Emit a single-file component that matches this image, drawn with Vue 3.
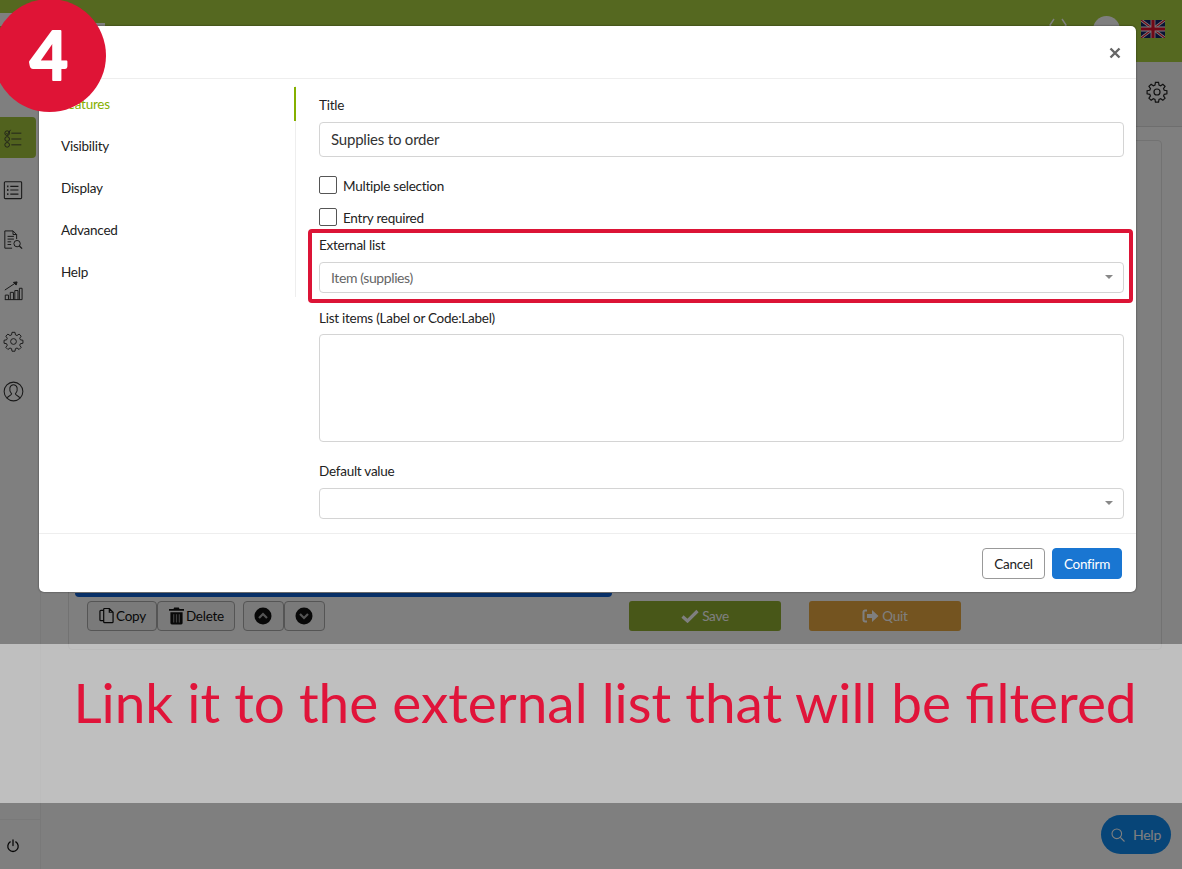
<script setup>
const navItems = [
  { label: 'Features', active: true },
  { label: 'Visibility' },
  { label: 'Display' },
  { label: 'Advanced' },
  { label: 'Help' },
]
</script>

<template>
  <div class="app">
    <div class="page">
      <header class="topbar">
        <div class="logo"></div>
        <div class="top-right">
          <svg class="code-ic" width="22" height="14" viewBox="0 0 22 14"><path d="M7 1 3 7l4 6M15 1l4 6-4 6" fill="none" stroke="#fff" stroke-width="1.4"/></svg>
          <div class="avatar"></div>
          <svg class="flag" width="24" height="18" viewBox="0 0 60 45">
            <rect width="60" height="45" fill="#12246a"/>
            <path d="M0 0 60 45M60 0 0 45" stroke="#fff" stroke-width="7"/>
            <path d="M0 0 60 45M60 0 0 45" stroke="#e0102e" stroke-width="3"/>
            <path d="M30 0v45M0 22.500h60" stroke="#fff" stroke-width="12"/>
            <path d="M30 0v45M0 22.500h60" stroke="#e0102e" stroke-width="8"/>
          </svg>
        </div>
      </header>
      <div class="below">
        <aside class="sidebar">
          <div class="side-list">
            <div class="side-item on">
              <svg width="20" height="20" viewBox="0 0 24 24" fill="none" stroke="#333" stroke-width="1"><circle cx="5" cy="5" r="2.800"/><circle cx="5" cy="12" r="2.800"/><circle cx="5" cy="19" r="2.800"/><path d="M10 5h12M10 12h12M10 19h12M4 5l1.500 1.500L9 1"/></svg>
            </div>
            <div class="side-item">
              <svg width="20" height="20" viewBox="0 0 22 22" fill="none" stroke="#333" stroke-width="1.200"><rect x="1.500" y="2" width="19" height="18.500" rx="1"/><path d="M8 7h9M8 11h9M8 15.500h9"/><path d="M4.500 7h1.500M4.500 11h1.500M4.500 15.500h1.500" stroke-width="2"/></svg>
            </div>
            <div class="side-item">
              <svg width="20" height="20" viewBox="0 0 22 22" fill="none" stroke="#333" stroke-width="1.100"><path d="M10 20H2V1h9l4 4v5"/><path d="M11 1v4h4M5 7h7M5 10h7M5 13h4M5 16h4"/><circle cx="15.500" cy="15" r="3.500"/><path d="M18 17.500l3 3" stroke-width="1.500"/></svg>
            </div>
            <div class="side-item">
              <svg width="20" height="20" viewBox="0 0 22 22" fill="none" stroke="#333" stroke-width="1.100"><path d="M2 20.500h19M2.500 20.500v-5h3.500v5M8 20.500v-8h3.500v8M13 20.500v-10h3.500v10M18 20.500V8h3v12.500M2 10 14 2"/><path d="M11.500 1.500 15.500 1l-1 3.500z" fill="#333"/></svg>
            </div>
            <div class="side-item">
              <svg width="21" height="21" viewBox="0 0 24 24" fill="none" stroke="#333" stroke-width="1.100"><path d="M10.300 2h3.400l.5 2.900 1.800.8 2.400-1.700 2.400 2.400-1.700 2.400.8 1.800 2.900.5v3.400l-2.900.5-.8 1.800 1.700 2.400-2.400 2.400-2.400-1.700-1.800.8-.5 2.900h-3.400l-.5-2.900-1.800-.8-2.400 1.700-2.400-2.400 1.700-2.400-.8-1.800-2.900-.5v-3.400l2.900-.5.8-1.800-1.700-2.400 2.400-2.400 2.400 1.700 1.800-.8z" transform="translate(0 -.500)"/><circle cx="12" cy="12" r="3.300"/></svg>
            </div>
            <div class="side-item">
              <svg width="21" height="21" viewBox="0 0 22 22" fill="none" stroke="#333" stroke-width="1.100"><circle cx="11" cy="11" r="9.800"/><path d="M4.500 18c.5-2.500 4-2.500 4.500-4.500-3.500-4-2-9.500 2-9.500s5.500 5.500 2 9.500c.5 2 4 2 4.500 4.500"/></svg>
            </div>
          </div>
          <div class="power">
            <svg width="14" height="14" viewBox="0 0 14 14" fill="none" stroke="#111" stroke-width="1.300" stroke-linecap="round"><path d="M7 1v5.500M4.200 2.900a5.200 5.200 0 1 0 5.600 0"/></svg>
          </div>
        </aside>
        <main class="main">
          <div class="subbar">
            <svg width="22" height="22" viewBox="0 0 24 24" fill="none" stroke="#222" stroke-width="1.300"><path d="M10.300 2h3.400l.5 2.900 1.800.8 2.400-1.700 2.400 2.400-1.700 2.400.8 1.800 2.900.5v3.400l-2.900.5-.8 1.800 1.700 2.400-2.400 2.400-2.400-1.700-1.800.8-.5 2.900h-3.400l-.5-2.900-1.800-.8-2.400 1.700-2.400-2.400 1.700-2.400-.8-1.800-2.900-.5v-3.400l2.900-.5.8-1.800-1.700-2.400 2.400-2.400 2.400 1.700 1.800-.8z" transform="translate(0 -.500)"/><circle cx="12" cy="12" r="3.300"/></svg>
          </div>
          <section class="card">
            <div class="bluebar"></div>
            <div class="toolbar">
              <div class="tools">
                <div class="group">
                  <button class="tool">
                    <svg width="15" height="18" viewBox="0 0 16 18" fill="none" stroke="#111" stroke-width="1.300"><path d="M5 14H2a1 1 0 0 1-1-1V4a1 1 0 0 1 1-1h3"/><path d="M5.500 1H11l4 4v10a1 1 0 0 1-1 1H6a1 1 0 0 1-1-1V2a1 1 0 0 1 .500-1zM11 1v4h4"/></svg>
                    Copy
                  </button>
                  <button class="tool">
                    <svg width="15" height="18" viewBox="0 0 16 18"><path d="M5.500 0h5l.7 1.500H16v2H0v-2h4.800zM1.500 5h13v11.500a1.500 1.500 0 0 1-1.500 1.500H3a1.500 1.500 0 0 1-1.500-1.500z" fill="#111"/><path d="M5 7v9M8 7v9M11 7v9" stroke="#808080" stroke-width="1.300"/></svg>
                    Delete
                  </button>
                </div>
                <div class="group">
                  <button class="tool round">
                    <svg width="18" height="18" viewBox="0 0 18 18"><circle cx="9" cy="9" r="8.500" fill="#111"/><path d="M5 11l4-4 4 4" fill="none" stroke="#aaa" stroke-width="2.200"/></svg>
                  </button>
                  <button class="tool round">
                    <svg width="18" height="18" viewBox="0 0 18 18"><circle cx="9" cy="9" r="8.500" fill="#111"/><path d="M5 7l4 4 4-4" fill="none" stroke="#aaa" stroke-width="2.200"/></svg>
                  </button>
                </div>
              </div>
              <div class="actions">
                <button class="act save">
                  <svg width="18" height="14" viewBox="0 0 18 14"><path d="M1.500 7.500 6.500 12 16.500 2" fill="none" stroke="#fff" stroke-width="3.200"/></svg>
                  Save
                </button>
                <button class="act quit">
                  <svg width="17" height="14" viewBox="0 0 17 14"><path d="M5 1.500H3A1.500 1.500 0 0 0 1.500 3v8A1.500 1.500 0 0 0 3 12.500h2" fill="none" stroke="#fff" stroke-width="2"/><path d="M5 5h5V1l6.500 6L10 13V9H5z" fill="#fff"/></svg>
                  Quit
                </button>
              </div>
            </div>
          </section>
        </main>
      </div>
      <button class="help">
        <svg width="14" height="14" viewBox="0 0 14 14" fill="none" stroke="#fff" stroke-width="1.100"><circle cx="5.800" cy="5.800" r="4.800"/><path d="m9.300 9.300 4.200 4.200"/></svg>
        Help
      </button>
    </div>

    <div class="backdrop"></div>

    <div class="modal">
      <div class="modal-head">
        <svg class="close" width="12" height="12" viewBox="0 0 12 12"><path d="M1.500 1.500l9 9M10.500 1.500l-9 9" stroke="#666" stroke-width="2.400"/></svg>
      </div>
      <div class="modal-body">
        <nav class="modal-nav">
          <a v-for="item in navItems" :key="item.label" class="nav-link" :class="{ active: item.active }">{{ item.label }}</a>
        </nav>
        <form class="form">
          <label class="label first">Title</label>
          <div class="input title">Supplies to order</div>
          <label class="check one"><span class="box"></span><span class="check-text">Multiple selection</span></label>
          <label class="check two"><span class="box"></span><span class="check-text">Entry required</span></label>
          <div class="highlighted">
            <label class="label ext">External list</label>
            <div class="input select"><span>Item (supplies)</span><i class="caret"></i></div>
            <div class="red-frame"></div>
          </div>
          <label class="label items">List items (Label or Code:Label)</label>
          <div class="input area"></div>
          <label class="label def">Default value</label>
          <div class="input select"><span></span><i class="caret"></i></div>
        </form>
      </div>
      <div class="modal-foot">
        <button class="btn cancel">Cancel</button>
        <button class="btn confirm">Confirm</button>
      </div>
    </div>

    <div class="caption">Link it to the external list that will be filtered</div>

    <div class="badge">
      <svg width="113" height="113" viewBox="0 0 113 113">
        <text x="56" y="81" text-anchor="middle" class="badge-num">4</text>
      </svg>
    </div>
  </div>
</template>

<style>
html, body { margin: 0; background: #fff; }
</style>

<style scoped>
* { box-sizing: border-box; }
.app {
  position: relative;
  width: 1182px;
  height: 869px;
  overflow: hidden;
  font-family: Lato, "Liberation Sans", sans-serif;
  font-size: 13.500px;
  letter-spacing: -0.25px;
  color: #222;
}
button { font-family: inherit; letter-spacing: inherit; }

.page { width: 100%; height: 100%; display: flex; flex-direction: column; background: #fff; }
.topbar {
  height: 62px;
  flex: none;
  background: #aad040;
  display: flex;
  justify-content: space-between;
}
.logo { position: relative; width: 105px; height: 3px; margin-top: 23px; background: #fff; }
.logo::before { content: ""; position: absolute; left: 0; top: -10px; width: 14px; height: 13px; background: #fff; }
.top-right { display: flex; align-items: flex-start; }
.code-ic { margin-top: 18px; }
.avatar { width: 27px; height: 27px; border-radius: 50%; background: #fff; margin: 16px 0 0 24px; }
.flag { margin: 20px 17px 0 21px; }

.below { flex: 1; display: flex; min-height: 0; }
.sidebar {
  width: 41px;
  flex: none;
  border-right: 1px solid #f2f2f2;
  display: flex;
  flex-direction: column;
  justify-content: space-between;
  padding-top: 55px;
}
.side-list { display: flex; flex-direction: column; gap: 9.500px; }
.side-item { width: 36px; height: 41px; display: flex; align-items: center; justify-content: center; padding: 3px 10px 0 0; }
.side-item.on { background: #a3c43c; border-radius: 0 4px 4px 0; }
.power { height: 50px; border-top: 1px solid #f2f2f2; display: flex; align-items: center; padding: 2px 0 0 6px; }

.main { flex: 1; min-width: 0; display: flex; flex-direction: column; }
.subbar {
  height: 65px;
  flex: none;
  border-bottom: 1px solid #ddd;
  background: #f4f4f4;
  display: flex;
  align-items: center;
  justify-content: flex-end;
  padding: 0 14px 4px 0;
}
.card {
  margin: 13px 20px 0 27px;
  height: 510px;
  border: 1px solid #e4e4e4;
  border-radius: 4px;
  padding: 452px 0 0 6px;
}
.bluebar { width: 537px; height: 4px; margin-bottom: 4px; background: #1060d0; border-radius: 0 0 12px 12px; }
.toolbar { display: flex; padding-left: 12px; }
.tools { display: flex; gap: 8px; width: 542px; }
.group { display: flex; }
.tool {
  height: 30px;
  padding: 0 10px 0 11px;
  display: flex;
  align-items: center;
  gap: 2px;
  background: #f4f4f4;
  border: 1px solid #aaa;
  border-radius: 4px;
  color: #111;
  font-size: 13.500px;
}
.tool.round { width: 41px; padding: 0; justify-content: center; }
.actions { display: flex; gap: 28px; }
.act {
  width: 152px;
  height: 30px;
  border: 1px solid transparent;
  border-radius: 3px;
  color: #fff;
  font-size: 13.500px;
  display: flex;
  align-items: center;
  justify-content: center;
  gap: 3px;
}
.save { background: #90ae30; }
.quit { background: #e8a840; }

.help {
  position: absolute;
  left: 1101px;
  top: 815px;
  width: 70px;
  height: 39px;
  border-radius: 20px;
  border: 0;
  background: #0e8af0;
  color: #fff;
  font-size: 14px;
  display: flex;
  align-items: center;
  justify-content: center;
  gap: 8px;
}

.backdrop { position: absolute; inset: 0; background: rgba(0, 0, 0, 0.5); }

.modal {
  position: absolute;
  left: 39px;
  top: 26px;
  width: 1097px;
  height: 566px;
  background: #fff;
  border-radius: 5px;
  box-shadow: 0 0 2px rgba(0, 0, 0, 0.6);
  display: flex;
  flex-direction: column;
}
.modal-head {
  height: 53px;
  flex: none;
  border-bottom: 1px solid #eee;
  display: flex;
  align-items: center;
  justify-content: flex-end;
  padding: 2px 15px 0 0;
}
.modal-body { flex: 1; display: flex; min-height: 0; }
.modal-nav {
  width: 257px;
  flex: none;
  height: 211px;
  margin-top: 7px;
  border-right: 1px solid #eee;
  padding-top: 1px;
  display: flex;
  flex-direction: column;
}
.nav-link { height: 42px; line-height: 34px; padding-left: 22px; margin-right: -1px; color: #222; }
.nav-link.active { height: 34px; margin-bottom: 8px; color: #85b000; border-right: 2px solid #85b000; }
.form { flex: 1; padding: 0 12px 0 23px; display: flex; flex-direction: column; min-width: 0; }
.label { display: block; line-height: 18px; color: #222; }
.label.first { margin-top: 17px; }
.input {
  border: 1px solid #d4d4d4;
  border-radius: 4px;
  background: #fff;
}
.input.title { height: 35px; margin-top: 8px; padding: 0 11px; line-height: 33px; font-size: 15px; letter-spacing: -0.2px; color: #333; }
.check { display: flex; align-items: center; gap: 6px; height: 18px; color: #222; }
.check.one { margin-top: 19px; }
.check.two { margin-top: 14px; }
.check-text { padding-top: 2px; }
.box { width: 18px; height: 18px; border: 1.500px solid #555; border-radius: 2px; display: block; }
.highlighted { position: relative; }
.label.ext { margin-top: 10px; }
.select {
  height: 31px;
  padding: 0 10px 1px 11px;
  display: flex;
  align-items: center;
  justify-content: space-between;
  font-size: 14px;
  letter-spacing: -0.4px;
  color: #666;
}
.highlighted .select { margin-top: 8px; }
.caret { width: 0; height: 0; border: 4px solid transparent; border-top-color: #888; border-bottom: 0; }
.red-frame {
  position: absolute;
  left: -11px;
  right: -9px;
  top: 3px;
  bottom: -10px;
  border: 4.500px solid #dc1436;
  border-radius: 4px;
  pointer-events: none;
}
.label.items { margin-top: 15px; padding-top: 1px; line-height: 18px; height: 19px; }
.input.area { height: 108px; margin-top: 7px; }
.label.def { margin-top: 20px; }
.label.def + .select { margin-top: 8px; }

.modal-foot {
  height: 59px;
  flex: none;
  border-top: 1px solid #eee;
  display: flex;
  justify-content: flex-end;
  align-items: flex-start;
  gap: 7px;
  padding: 14px 14px 0 0;
}
.btn { height: 31px; border-radius: 4px; font-size: 13.500px; }
.cancel { width: 63px; background: #fff; border: 1px solid #999; color: #222; }
.confirm { width: 70px; background: #1976d2; border: 1px solid #1976d2; color: #fff; }

.caption {
  position: absolute;
  left: 0;
  right: 0;
  top: 644px;
  height: 159px;
  background: rgba(255, 255, 255, 0.5);
  display: flex;
  align-items: center;
  justify-content: center;
  color: #e0143a;
  font-size: 54.900px;
  letter-spacing: 0;
  font-weight: 400;
  padding-left: 28px;
  padding-bottom: 44px;
  white-space: nowrap;
}

.badge {
  position: absolute;
  left: -7px;
  top: -1px;
  width: 113px;
  height: 113px;
  border-radius: 50%;
  background: #df1436;
  overflow: hidden;
}
.badge-num {
  font-family: Lato, sans-serif;
  font-weight: 700;
  font-size: 66px;
  letter-spacing: 0;
  fill: #fff;
  stroke: #fff;
  stroke-width: 2;
  stroke-linejoin: round;
}
</style>
